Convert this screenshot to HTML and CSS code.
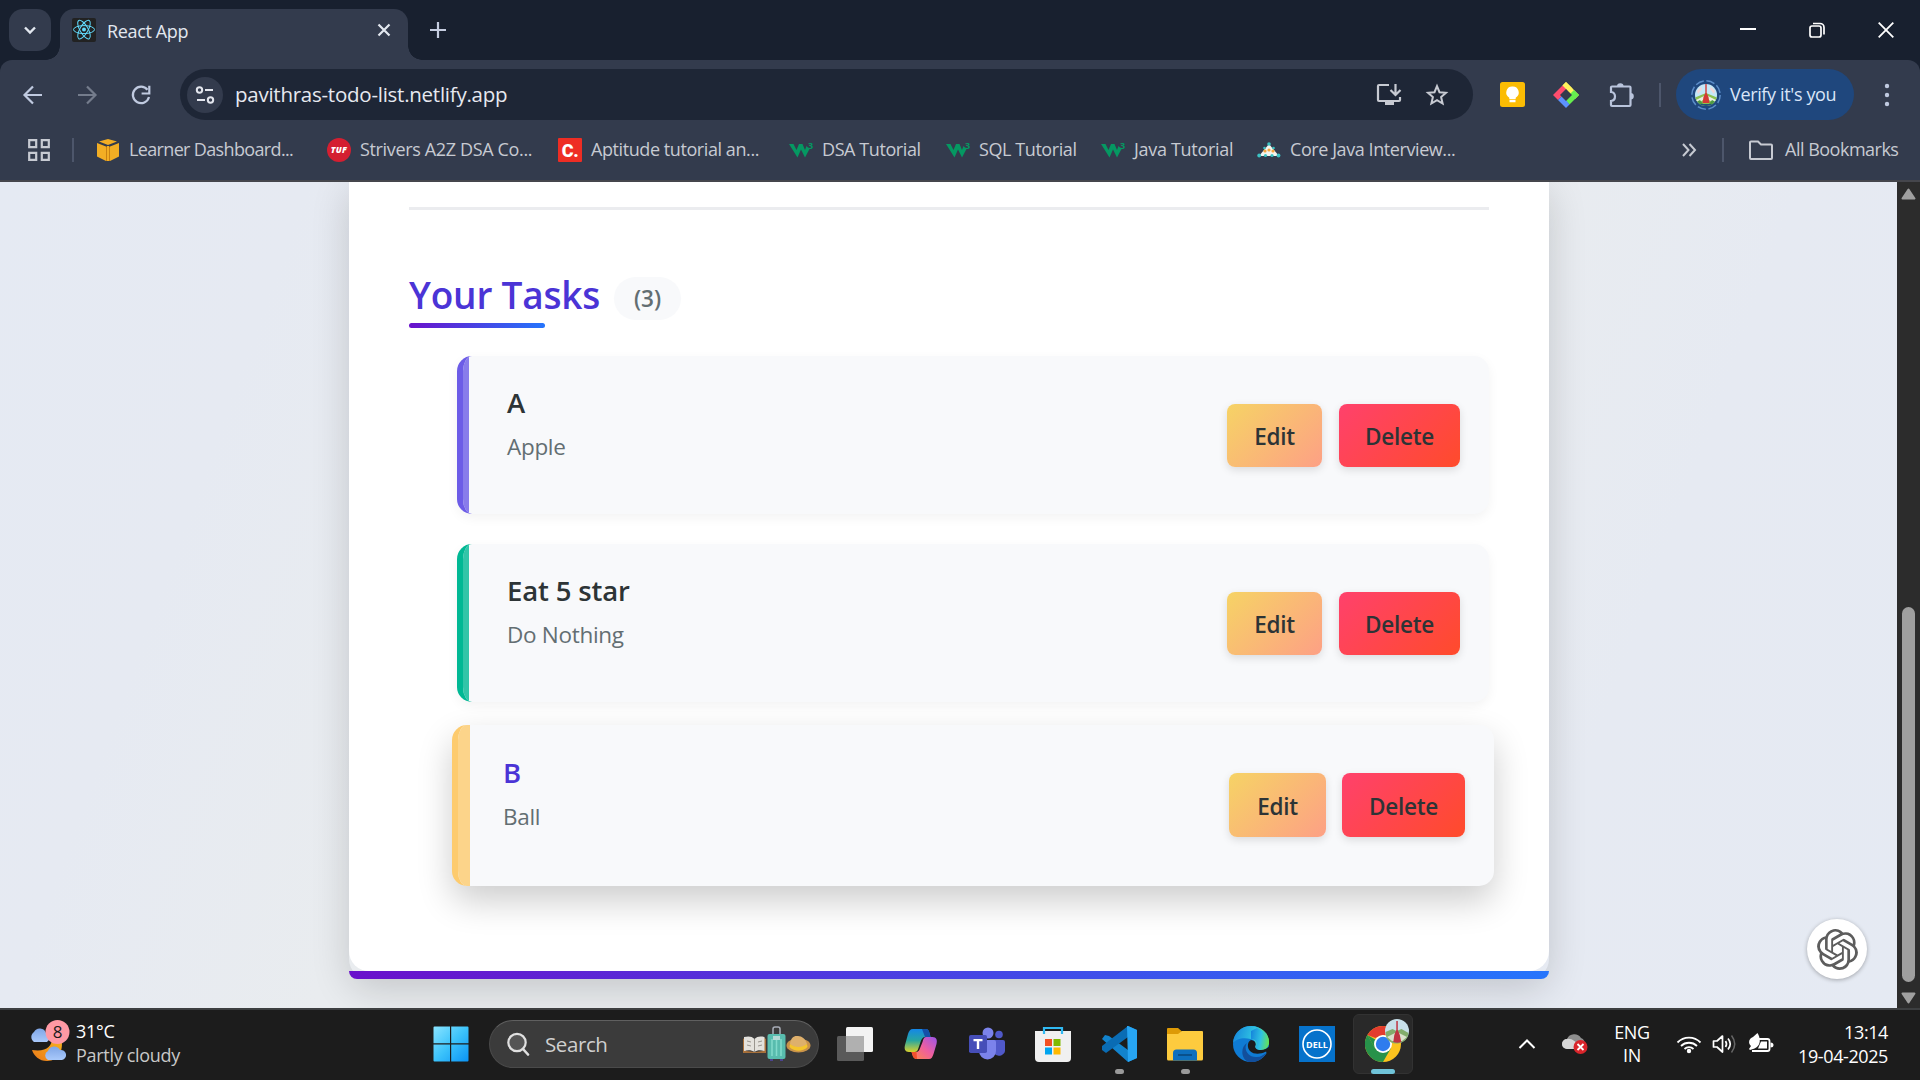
FILE: index.html
```html
<!DOCTYPE html>
<html lang="en">
<head>
<meta charset="utf-8">
<title>React App</title>
<link rel="stylesheet" href="styles.css">
</head>
<body>
<div class="screen">
  <header class="browser">
    <div class="tabstrip">
      <button class="tab-search"><svg width="14" height="14" viewBox="0 0 14 14"><path d="M2 4.5l5 5 5-5" fill="none" stroke="#e3e8f0" stroke-width="2.4"/></svg></button>
      <div class="tab">
        <svg class="favicon" width="24" height="24" viewBox="0 0 24 24"><rect width="24" height="24" rx="2" fill="#222"/><g fill="none" stroke="#61dafb" stroke-width="1"><ellipse cx="12" cy="11.6" rx="10.5" ry="4"/><ellipse cx="12" cy="11.6" rx="10.5" ry="4" transform="rotate(60 12 11.6)"/><ellipse cx="12" cy="11.6" rx="10.5" ry="4" transform="rotate(120 12 11.6)"/></g><circle cx="12" cy="11.6" r="2" fill="#61dafb"/></svg>
        <span class="tab-title">React App</span>
        <svg class="tab-close" width="14" height="14" viewBox="0 0 14 14"><path d="M1.5 1.5l11 11M12.500 1.500l-11 11" stroke="#e3e8f0" stroke-width="2.200"/></svg>
      </div>
      <svg class="new-tab" width="18" height="18" viewBox="0 0 18 18"><path d="M9 1v16M1 9h16" stroke="#c5cde0" stroke-width="2.200"/></svg>
      <div class="window-controls">
        <svg width="16" height="16" viewBox="0 0 16 16"><path d="M0 7h16" stroke="#fff" stroke-width="2"/></svg>
        <svg width="16" height="16" viewBox="0 0 16 16"><g fill="none" stroke="#fff" stroke-width="1.700"><rect x="1" y="4" width="11" height="11" rx="2"/><path d="M4 1.500h7a4 4 0 0 1 4 4v7"/></g></svg>
        <svg width="16" height="16" viewBox="0 0 16 16"><path d="M.7.700l14.600 14.600M15.300.700L.7 15.300" stroke="#fff" stroke-width="1.800"/></svg>
      </div>
    </div>
    <div class="toolbar">
      <svg class="nav-icon" width="24" height="24" viewBox="0 0 24 24"><path d="M21 12H4M12 3.500L3.500 12l8.500 8.500" fill="none" stroke="#c0cae0" stroke-width="2.200"/></svg>
      <svg class="nav-icon" width="24" height="24" viewBox="0 0 24 24"><path d="M3 12h17M12 3.500l8.500 8.500-8.500 8.500" fill="none" stroke="#747c8c" stroke-width="2.200"/></svg>
      <svg class="nav-icon" width="24" height="24" viewBox="0 0 24 24"><path d="M18.500 6.800A8.200 8.200 0 1 0 20 14" fill="none" stroke="#c0cae0" stroke-width="2.200"/><path d="M20.300 2.800v7.700h-7.700" fill="none" stroke="#c0cae0" stroke-width="2.200"/></svg>
      <div class="omnibox">
        <span class="site-info"><svg width="20" height="20" viewBox="0 0 20 20"><g fill="none" stroke="#e3e6ee" stroke-width="2"><circle cx="4.500" cy="5" r="2.700"/><path d="M10 5h8M2 15h8"/><circle cx="15.500" cy="15" r="2.700"/></g></svg></span>
        <span class="url">pavithras-todo-list.netlify.app</span>
        <svg class="install" width="26" height="24" viewBox="0 0 26 24"><path d="M13 2H3a1 1 0 0 0-1 1v14a1 1 0 0 0 1 1h20a1 1 0 0 0 1-1v-3" fill="none" stroke="#c7cad2" stroke-width="2.200"/><path d="M9 18h9v4H9z" fill="#c7cad2"/><path d="M19.500 1v10M14.500 7l5 5 5-5" fill="none" stroke="#c7cad2" stroke-width="2.200"/></svg>
        <svg width="24" height="24" viewBox="0 0 24 24"><path d="M12 3.200l2.500 6 6.500.6-4.900 4.300 1.500 6.400L12 17.100l-5.600 3.400 1.500-6.400L3 9.800l6.500-.6z" fill="none" stroke="#c7cad2" stroke-width="2"/></svg>
      </div>
      <svg class="ext-keep" width="25" height="25" viewBox="0 0 25 25"><rect width="25" height="25" rx="2.500" fill="#fbbc04"/><path d="M12.500 4.500a6 6 0 0 0-3.200 11.200V17h6.400v-1.300A6 6 0 0 0 12.500 4.500zM9.500 17.800h6v2.400h-6z" fill="#fff"/></svg>
      <svg class="ext-diamond" width="26" height="26" viewBox="0 0 26 26"><path d="M13 0l6.500 6.500-6.500 6-3.500-9z" fill="#fff35c"/><path d="M13 0l13 13-4 4-9-9.500-3.500-4z" fill="#fff35c"/><path d="M9.500 3.500l5 5L5 18l-5-5z" fill="#ff4d6d"/><path d="M26 13L16.500 22.500l-5-5 9.500-9.500z" fill="#66ee4e"/><path d="M5 18l4.500-4.500 7 9L13 26z" fill="#5c92ff"/><path d="M13 7l6 6-6 6-6-6z" fill="#333b4d"/></svg>
      <svg class="ext-puzzle" width="26" height="26" viewBox="0 0 26 26"><path d="M3 4.500h17.500a1 1 0 0 1 1 1V23a1 1 0 0 1-1 1H3a1 1 0 0 1-1-1v-4q4-.5 4-4.500t-4-4.500V5.500a1 1 0 0 1 1-1z" fill="none" stroke="#b9c4dc" stroke-width="2.200"/><path d="M8 4.500a3.300 3.300 0 0 1 6.600 0zM21.500 11a3.300 3.300 0 0 1 0 6.600z" fill="#b9c4dc"/></svg>
      <i class="divider"></i>
      <div class="profile">
        <svg width="32" height="32" viewBox="0 0 32 32"><defs><clipPath id="avatar"><circle cx="16" cy="16" r="11"/></clipPath></defs><circle cx="16" cy="16" r="14.200" fill="none" stroke="#5b8cc8" stroke-width="1.500" stroke-dasharray="8.500 2.650"/><g clip-path="url(#avatar)"><path fill="#c4e8f8" d="M4 4h24v24H4z"/><path fill="#f3d5d6" d="M7 12l4-4 1 2-4 5zM25 12l-4-4-1 2 4 5z"/><path fill="#8cc152" d="M4 19l12-5 12 5v9H4z"/><path fill="#e9efe0" d="M4 22l10-5 2 2-9 6zM28 22l-10-5-2 2 9 6z"/><path fill="#4f9a43" d="M4 24l6-3 3 4v4H4zM28 24l-6-3-3 4v4h9z"/><path fill="#d33a35" d="M15.300 5h1.400v9l1.800 4 1 6h-7l1-6 1.800-4z"/><path fill="#23507c" d="M9 25h14v4H9z"/></g></svg>
        <span>Verify it's you</span>
      </div>
      <svg class="menu-dots" width="6" height="26" viewBox="0 0 6 26"><g fill="#c0cae0"><circle cx="3" cy="4" r="2.200"/><circle cx="3" cy="13" r="2.200"/><circle cx="3" cy="22" r="2.200"/></g></svg>
    </div>
    <nav class="bookmarks">
      <svg class="apps" width="22" height="22" viewBox="0 0 22 22"><g fill="none" stroke="#c7cad2" stroke-width="2.200"><path d="M1.200 1.200h7v7h-7zM13.800 1.200h7v7h-7zM1.200 13.800h7v7h-7zM13.800 13.800h7v7h-7z"/></g></svg>
      <i class="divider"></i>
      <a class="bm bm-learner"><svg width="24" height="24" viewBox="0 0 24 24"><path fill="#f3ae24" d="M1 5l9 3.500V23L1 18.500zM23 5l-9 3.500V23l9-4.500zM3 3.500L12 1l9 2.500L12 7z"/><path fill="#c98212" d="M10 8.500h4V23h-4z"/><path fill="#f3ae24" d="M11 8h2v15h-2z"/></svg><span>Learner Dashboard...</span></a>
      <a class="bm bm-tuf"><svg width="24" height="24" viewBox="0 0 24 24"><circle cx="12" cy="12" r="12" fill="#d41f31"/><text x="12" y="15" class="tuf-text">TUF</text></svg><span>Strivers A2Z DSA Co...</span></a>
      <a class="bm bm-apt"><svg width="24" height="24" viewBox="0 0 24 24"><rect width="24" height="24" rx="1" fill="#ee2d24"/><text x="12" y="19" class="c-text">C.</text></svg><span>Aptitude tutorial an...</span></a>
      <a class="bm bm-dsa"><svg width="24" height="24" viewBox="0 0 24 24"><path class="w3" d="M0 6h4.500l3 6L10 6h3.500l2.500 6 1.500-4 3 3-4.500 8.500-4-8-3.500 8z"/><text x="19" y="10.500" class="w3-text">3</text></svg><span>DSA Tutorial</span></a>
      <a class="bm bm-sql"><svg width="24" height="24" viewBox="0 0 24 24"><path class="w3" d="M0 6h4.500l3 6L10 6h3.500l2.500 6 1.500-4 3 3-4.500 8.500-4-8-3.500 8z"/><text x="19" y="10.500" class="w3-text">3</text></svg><span>SQL Tutorial</span></a>
      <a class="bm bm-java"><svg width="24" height="24" viewBox="0 0 24 24"><path class="w3" d="M0 6h4.500l3 6L10 6h3.500l2.500 6 1.500-4 3 3-4.500 8.500-4-8-3.500 8z"/><text x="19" y="10.500" class="w3-text">3</text></svg><span>Java Tutorial</span></a>
      <a class="bm bm-core"><svg width="24" height="24" viewBox="0 0 24 24"><path d="M12 6L2 18h20z" fill="#f4f4ee"/><g fill="#3cc3c4"><circle cx="12" cy="6" r="1.800"/><circle cx="7.500" cy="10" r="1.300"/><circle cx="16.500" cy="10" r="1.300"/><circle cx="2.200" cy="17.500" r="1.900"/><circle cx="8.500" cy="17.500" r="1.600"/><circle cx="15" cy="17.500" r="1.600"/><circle cx="21.500" cy="17.500" r="1.900"/></g><g fill="#f5a43c"><circle cx="8" cy="13" r="1.600"/><circle cx="12" cy="12" r="1.600"/><circle cx="16" cy="13" r="1.600"/></g></svg><span>Core Java Interview...</span></a>
      <svg class="more" width="16" height="16" viewBox="0 0 16 16"><path d="M2 2l5.500 6L2 14M8.500 2l5.500 6-5.500 6" fill="none" stroke="#c7cad2" stroke-width="2"/></svg>
      <i class="divider"></i>
      <a class="bm all-bm"><svg width="24" height="20" viewBox="0 0 24 20"><path d="M2 1.500h7l3 3h10a1 1 0 0 1 1 1V18a1 1 0 0 1-1 1H2a1 1 0 0 1-1-1V2.500a1 1 0 0 1 1-1z" fill="none" stroke="#c7cad2" stroke-width="2"/></svg><span>All Bookmarks</span></a>
    </nav>
  </header>

  <div class="viewport">
    <div class="page">
      <main class="card">
        <div class="card-body">
          <div class="section-head">
            <h2>Your Tasks</h2>
            <span class="count">(3)</span>
          </div>
          <ul class="tasks">
            <li class="task violet">
              <div class="task-text"><h3>A</h3><p>Apple</p></div>
              <div class="actions"><button class="btn edit">Edit</button><button class="btn delete">Delete</button></div>
            </li>
            <li class="task green">
              <div class="task-text"><h3>Eat 5 star</h3><p>Do Nothing</p></div>
              <div class="actions"><button class="btn edit">Edit</button><button class="btn delete">Delete</button></div>
            </li>
            <li class="task amber hovered">
              <div class="task-text"><h3>B</h3><p>Ball</p></div>
              <div class="actions"><button class="btn edit">Edit</button><button class="btn delete">Delete</button></div>
            </li>
          </ul>
        </div>
        <div class="card-bar"></div>
      </main>
      <div class="assistant"><svg width="41" height="41" viewBox="0 0 24 24"><path fill="#5d5d5d" d="M22.282 9.821a5.985 5.985 0 0 0-.516-4.910 6.046 6.046 0 0 0-6.510-2.900A6.065 6.065 0 0 0 4.981 4.182a5.985 5.985 0 0 0-3.998 2.900 6.046 6.046 0 0 0 .743 7.097 5.980 5.980 0 0 0 .510 4.911 6.051 6.051 0 0 0 6.515 2.900A5.985 5.985 0 0 0 13.260 24a6.056 6.056 0 0 0 5.772-4.206 5.990 5.990 0 0 0 3.998-2.900 6.056 6.056 0 0 0-.748-7.073zM13.260 22.430a4.476 4.476 0 0 1-2.876-1.040l.142-.081 4.778-2.758a.795.795 0 0 0 .393-.681v-6.737l2.020 1.168a.071.071 0 0 1 .038.052v5.583a4.504 4.504 0 0 1-4.495 4.494zM3.600 18.304a4.471 4.471 0 0 1-.535-3.014l.142.085 4.783 2.759a.771.771 0 0 0 .780 0l5.843-3.369v2.332a.080.080 0 0 1-.033.062L9.740 19.950a4.500 4.500 0 0 1-6.140-1.646zM2.340 7.896a4.485 4.485 0 0 1 2.366-1.973V11.600a.766.766 0 0 0 .388.676l5.815 3.355-2.020 1.168a.076.076 0 0 1-.071 0l-4.830-2.786A4.504 4.504 0 0 1 2.340 7.872zm16.597 3.855l-5.833-3.387L15.119 7.200a.076.076 0 0 1 .071 0l4.830 2.791a4.494 4.494 0 0 1-.676 8.105v-5.678a.790.790 0 0 0-.407-.667zm2.010-3.023l-.141-.085-4.774-2.782a.776.776 0 0 0-.785 0L9.409 9.230V6.897a.066.066 0 0 1 .028-.061l4.830-2.787a4.500 4.500 0 0 1 6.680 4.660zm-12.640 4.135l-2.020-1.164a.080.080 0 0 1-.038-.057V6.075a4.500 4.500 0 0 1 7.375-3.453l-.142.080L8.704 5.460a.795.795 0 0 0-.393.681zm1.097-2.365l2.602-1.500 2.607 1.500v2.999l-2.597 1.500-2.607-1.500z"/></svg></div>
    </div>
    <div class="scrollbar">
      <svg width="15" height="12" viewBox="0 0 15 12"><path d="M7.500 1.500L13.500 10.500h-12z" fill="#a0a0a0" stroke="#a0a0a0" stroke-width="2" stroke-linejoin="round"/></svg>
      <div class="thumb"></div>
      <svg width="15" height="12" viewBox="0 0 15 12"><path d="M7.500 10.500L13.500 1.500h-12z" fill="#a0a0a0" stroke="#a0a0a0" stroke-width="2" stroke-linejoin="round"/></svg>
    </div>
  </div>

  <footer class="taskbar">
    <div class="weather">
      <svg width="44" height="44" viewBox="0 0 44 44"><defs><linearGradient id="moon" x1="1" y1="0" x2="0" y2="1"><stop offset="0" stop-color="#f9b41c"/><stop offset="1" stop-color="#ea7a1b"/></linearGradient><linearGradient id="cloud" x1="0" y1="0" x2="0" y2="1"><stop offset="0" stop-color="#7fa6e6"/><stop offset="1" stop-color="#a9c9fb"/></linearGradient></defs><path d="M33 18c3 10-1 23-14 23-8 0-13-5-15-11 14 2 20-3 20-12z" fill="url(#moon)"/><path d="M6 22a6 6 0 0 1 0-10 6.500 6.500 0 0 1 12 1 5 5 0 0 1 1 9z" fill="url(#cloud)"/><path d="M20 40a5 5 0 0 1 0-9 6.500 6.500 0 0 1 12-1 5 5 0 0 1 2 10z" fill="url(#cloud)"/><circle cx="29.500" cy="12" r="12" fill="#ff99a4"/><text x="29.500" y="17.500" class="badge-text">8</text></svg>
      <div class="weather-text"><span class="temp">31°C</span><span class="cond">Partly cloudy</span></div>
    </div>
    <svg class="start" width="36" height="36" viewBox="0 0 36 36"><defs><linearGradient id="win" x1="0" y1="0" x2="1" y2="1"><stop offset="0" stop-color="#8ae4ff"/><stop offset=".5" stop-color="#3cc3fb"/><stop offset="1" stop-color="#0a93f5"/></linearGradient></defs><path d="M1.500.500H17v16.700H.5V1.500a1 1 0 0 1 1-1zM18.200.500h16.300a1 1 0 0 1 1 1v15.700H18.200zM.5 18.400H17v17.100H1.500a1 1 0 0 1-1-1zM18.200 18.400h17.300v16.100a1 1 0 0 1-1 1H18.200z" fill="url(#win)"/></svg>
    <div class="search">
      <svg width="24" height="24" viewBox="0 0 24 24"><circle cx="11" cy="10.500" r="8.700" fill="#555" stroke="#e0e0e0" stroke-width="2.200"/><path d="M17 17l5 5.500" stroke="#e0e0e0" stroke-width="2.600" stroke-linecap="round"/></svg>
      <span>Search</span>
      <svg class="doodle" width="68" height="36" viewBox="0 0 68 36"><path d="M0 13l3-2v14l9 1 8-1V11l3 2v14H0z" fill="#a8703a"/><path d="M1 11c4-1 8-1 10.500 2C14 10 18 10 21.500 11v14c-4-1-7.500-1-10 1-3-2-6.500-2-10.500-1z" fill="#e4e2dd"/><path d="M11.500 13v13M4 15l4 1M4 19l4 1M19 15l-4 1M19 19l-4 1" stroke="#99958e" fill="none"/><path d="M30 8V3q0-2 2-2h3q2 0 2 2v5" fill="none" stroke="#a9adb8" stroke-width="1.500"/><rect x="24.500" y="8" width="18" height="25" rx="2" fill="#58bcae"/><path d="M29 13v17M33.500 14v16M38 13v17" stroke="#82dacc" stroke-width="1.500"/><path d="M30 10h7v4h-7z" fill="#b5d9d5"/><path d="M27 33h3v2h-3zM37 33h3v2h-3z" fill="#4c438e"/><ellipse cx="55.500" cy="19.500" rx="12" ry="7" fill="#c8924a"/><path d="M47 18c1-7 4-8.500 8-8s7 2 9 8c-4 5-12 5-17 0z" fill="#deb06c"/><path d="M47 18c5 4 12 4 17 0l.5 3c-5 5-13 5-18 0z" fill="#f5c52c"/></svg>
    </div>
    <div class="apps-row">
      <span class="app"><svg width="36" height="36" viewBox="0 0 36 36"><rect x="9" y="1" width="27" height="25" rx="1.500" fill="#f3f3f3"/><rect x="0" y="10" width="27" height="25" rx="1.500" fill="#5a5a5a"/><path d="M9 10h18v16H9z" fill="#b0b0b0"/></svg></span>
      <span class="app"><svg width="36" height="36" viewBox="0 0 36 36"><defs><linearGradient id="cpa" x1="0" y1="0" x2="0" y2="1"><stop offset="0" stop-color="#1487e8"/><stop offset=".5" stop-color="#28a6a0"/><stop offset="1" stop-color="#d9d22c"/></linearGradient><linearGradient id="cpb" x1="1" y1="0" x2="0" y2="1"><stop offset="0" stop-color="#9a55ea"/><stop offset=".5" stop-color="#ee5f9f"/><stop offset="1" stop-color="#ff8a45"/></linearGradient></defs><path d="M10 3h13c2 0 3 2 3.500 4l1 4h-5c-3 0-4 2-5 5l-2 6c-1 3-2 4-4 4H6c-4 0-5-3-4-7l3-11c1-3 2-5 5-5z" fill="url(#cpa)"/><path d="M19 3h4c2 0 3 2 3.500 4l1 4H22z" fill="#1450a8"/><path d="M26 33H14c-3 0-4-2-4.500-4l-1-3h4c3 0 4-2 5-5l2-5c1-4 2-5 4-5h6c4 0 5 3 4 7l-3 10c-1 3-2 5-4.500 5z" fill="url(#cpb)"/><path d="M14 33c-3 0-4-2-4.500-4l-1-3h5z" fill="#f0502e"/></svg></span>
      <span class="app"><svg width="36" height="36" viewBox="0 0 36 36"><circle cx="30" cy="8.500" r="3.800" fill="#5059c9"/><path d="M25 14h9a2 2 0 0 1 2 2v7a6 6 0 0 1-11 4z" fill="#5059c9"/><circle cx="19" cy="7" r="5.500" fill="#7b83eb"/><path d="M11 14h14a2 2 0 0 1 2 2v9a8.500 8.500 0 0 1-17 0V15z" fill="#7b83eb"/><rect x="0" y="9" width="18" height="18" rx="1.800" fill="#464eb8"/><path d="M4.500 13h9v2.200H10.200V23H7.800v-7.800H4.500z" fill="#fff"/></svg></span>
      <span class="app"><svg width="36" height="36" viewBox="0 0 36 36"><path d="M0 5h36v27a4 4 0 0 1-4 4H4a4 4 0 0 1-4-4z" fill="#f0f0f0"/><path d="M9 8V2h18v6" fill="none" stroke="#30b9f2" stroke-width="2.200"/><path fill="#f25022" d="M10 13h7v7h-7z"/><path fill="#7fba00" d="M18.500 13h7v7h-7z"/><path fill="#00a4ef" d="M10 21.500h7v7h-7z"/><path fill="#ffb900" d="M18.500 21.500h7v7h-7z"/></svg></span>
      <span class="app running"><svg width="36" height="36" viewBox="0 0 36 36"><path d="M27 0l9 4v28l-9 4L1 13l3-4 4 1 19 14z" fill="#1283cd"/><path d="M27 0v11L5 27l-4-3v-4z" fill="#0a6cb4"/><path d="M26 0l1 0 9 4v28l-9 4z" fill="#27a5f3"/></svg></span>
      <span class="app running"><svg width="36" height="36" viewBox="0 0 36 36"><path d="M0 3a1 1 0 0 1 1-1h10l4 3.500L11 10H0z" fill="#dd9a06"/><path d="M0 8h11l4-3h20a1 1 0 0 1 1 1v27a1.500 1.500 0 0 1-1.500 1.500h-33A1.500 1.500 0 0 1 0 33z" fill="#fdcb3e"/><path d="M6 34.500V27a3.500 3.500 0 0 1 3.500-3.500h17A3.500 3.500 0 0 1 30 27v7.500z" fill="#0d6fbd"/><path d="M11 29h14" stroke="#0a4d86" stroke-width="1.800"/></svg></span>
      <span class="app"><svg width="36" height="36" viewBox="0 0 36 36"><defs><linearGradient id="eg" x1="0" y1=".3" x2="1" y2=".5"><stop offset="0" stop-color="#1687dc"/><stop offset=".55" stop-color="#2fc2e2"/><stop offset="1" stop-color="#62e05c"/></linearGradient></defs><circle cx="18" cy="18" r="18" fill="#0f7bd4"/><path d="M0 17C1 6 9 0 18 0c11 0 18 8 18 16 0 5-4 8-8.500 8-5 0-6-2-5-4s0-6-5-7C10 11 3 13 0 17z" fill="url(#eg)"/><path d="M14 17c-4 6 1 15 10 14 4 0 6-2 9-4-4 8-12 10-17 9-8-2-9-15-2-19z" fill="#124f9c"/><path d="M18 14c-4 2-4 8-1 11 4 4 11 3 15 1 1-.4 2 0 1 1l6-2V16c-3 8-10 8-13 7-5-1-4-3-3.500-4 .6-2-1-5-4.500-5z" fill="#1c1c1c"/><path d="M18 13c5 0 7 4 5 7-1 2 0 4 5 4 4 0 8-3 8-8 0-3-1-6-3-9l-9-5-6 3z" fill="url(#eg)"/></svg></span>
      <span class="app"><svg width="36" height="36" viewBox="0 0 36 36"><path fill="#0672cb" d="M0 0h36v36H0z"/><circle cx="18" cy="18" r="14" fill="none" stroke="#fff" stroke-width="1.600"/><text x="18" y="21.600" class="dell-text">DELL</text></svg></span>
      <span class="app active"><svg width="44" height="44" viewBox="0 0 44 44"><circle cx="18" cy="26" r="18" fill="#fcc31e"/><path d="M2.400 17A18 18 0 0 1 33.600 17H18z" fill="#e33b2e"/><path d="M2.400 17A18 18 0 0 0 18 44l7.800-13.500L18 26 10.200 30.500z" fill="#27924a"/><path d="M2.400 17L10 30.500 18 26z" fill="#27924a"/><path d="M2.400 17l8 3 7.600-3z" fill="#e33b2e"/><circle cx="18" cy="26" r="9" fill="#fff"/><circle cx="18" cy="26" r="7.200" fill="#2f7cee"/><circle cx="32" cy="13" r="12" fill="#c8e0ea"/><path d="M20.500 14l7-3 4 2 5-2 7 4a12 12 0 0 1-22 5z" fill="#82ad6c"/><path d="M22 19l8-4 4 0 8 4-5 4h-10z" fill="#d9e2cd"/><path d="M31.300 3h1.500v9l2 5 1.500 7a12 12 0 0 1-8 0l1-7 2-5z" fill="#bf3442"/></svg></span>
    </div>
    <div class="tray">
      <svg class="chev" width="18" height="12" viewBox="0 0 18 12"><path d="M1.500 10L9 2.500l7.500 7.500" fill="none" stroke="#fff" stroke-width="2"/></svg>
      <svg class="onedrive" width="26" height="22" viewBox="0 0 26 22"><path d="M5 16A5 5 0 0 1 5 6a8 8 0 0 1 14-1c3 1 4 4 4 6l-3 5z" fill="#8e8e8e"/><path d="M5 16A5 5 0 0 1 5 6c5-1 8 3 14 7v3z" fill="#d6d6d6"/><circle cx="18.500" cy="14" r="7" fill="#d9252b"/><path d="M15.500 11l6 6M21.500 11l-6 6" stroke="#fff" stroke-width="1.800"/></svg>
      <div class="lang"><span>ENG</span><span>IN</span></div>
      <svg class="wifi" width="26" height="20" viewBox="0 0 26 20"><g fill="none" stroke="#fff" stroke-width="1.800"><path d="M1.500 8.500a16 16 0 0 1 23 0M5 12a11.500 11.500 0 0 1 16 0M8.500 15a6.500 6.500 0 0 1 9 0"/></g><circle cx="13" cy="17" r="2.200" fill="#fff"/></svg>
      <svg class="sound" width="26" height="20" viewBox="0 0 26 20"><g fill="none" stroke="#fff" stroke-width="1.700" stroke-linejoin="round"><path d="M1.500 7v6H5l5.500 5V2L5 7zM13.500 7q2 3 0 6M16 4.500q4.500 5.500 0 11"/></g><path d="M19.500 1.500q6.500 8.500 0 17" fill="none" stroke="#666" stroke-width="1.500"/></svg>
      <svg class="battery" width="26" height="22" viewBox="0 0 26 22"><path d="M11 6h8.500a2 2 0 0 1 2 2v8a2 2 0 0 1-2 2H4" fill="none" stroke="#fff" stroke-width="1.800"/><path d="M13 8.500h6v7h-9zM22.500 9.500q3 0 3 2.500t-3 2.500z" fill="#fff"/><path d="M9.500 0c3 5 4 12-3 15.500L2 17l-1-1 2-3C-1 9 2 5 5 4z" fill="#fff"/></svg>
      <div class="clock"><span>13:14</span><span>19-04-2025</span></div>
    </div>
  </footer>
</div>
</body>
</html>
```
FILE: styles.css
```css
* { box-sizing: border-box; }
body { margin: 0; font-family: "Open Sans", "Noto Sans", sans-serif; }
svg { display: block; flex: none; }
button { font-family: inherit; font-stretch: inherit; border: 0; padding: 0; }
.screen { width: 1920px; height: 1080px; display: flex; flex-direction: column; overflow: hidden; }

/* browser frame */
.browser { height: 182px; flex: none; background: #18202f; display: flex; flex-direction: column; font-stretch: 92%; }
.tabstrip { height: 60px; display: flex; align-items: center; padding-left: 9px; }
.tab-search { width: 42px; height: 42px; border-radius: 14px; background: #333b4d; display: flex; align-items: center; justify-content: center; }
.tab { position: relative; width: 348px; height: 51px; margin: 9px 0 0 9px; padding: 0 17px 9px 12px; border-radius: 14px 14px 0 0; background: #333b4d; display: flex; align-items: center; color: #e3e8f0; font-size: 18px; }
.tab::before, .tab::after { content: ""; position: absolute; bottom: 0; width: 14px; height: 14px; }
.tab::before { left: -14px; background: radial-gradient(circle at 0 0, transparent 13.500px, #333b4d 14px); }
.tab::after { right: -14px; background: radial-gradient(circle at 100% 0, transparent 13.500px, #333b4d 14px); }
.tab-title { margin: 1px auto 0 11px; letter-spacing: -.35px; }
.new-tab { margin-left: 21px; }
.window-controls { margin: 0 26px 0 auto; display: flex; gap: 53px; }
.toolbar { height: 69px; background: #333b4d; border-radius: 12px 12px 0 0; display: flex; align-items: center; padding-left: 21px; }
.nav-icon { margin-right: 30px; }
.omnibox { width: 1293px; height: 51px; margin-left: -3px; padding: 0 24px 0 7px; border-radius: 26px; background: #1e2636; display: flex; align-items: center; }
.site-info { width: 36px; height: 36px; border-radius: 50%; background: #333b4d; display: flex; align-items: center; justify-content: center; }
.url { margin: -2px auto 0 12px; color: #e6e9f0; font-size: 20.500px; letter-spacing: -.25px; }
.install { margin-right: 23px; }
.ext-keep { margin-left: 27px; }
.ext-diamond { margin-left: 28px; }
.ext-puzzle { margin-left: 30px; }
.divider { width: 2px; height: 24px; background: #4d566b; flex: none; }
.toolbar .divider { margin-left: 24px; }
.profile { width: 178px; height: 51px; margin-left: 15px; padding-left: 14px; border-radius: 26px; background: #1f477d; display: flex; align-items: center; gap: 8px; color: #d9e5f8; font-size: 18px; letter-spacing: -.35px; white-space: nowrap; }
.profile span { margin-top: -1px; }
.menu-dots { margin-left: 30px; }
.bookmarks { height: 53px; background: #333b4d; border-bottom: 2px solid #45464c; display: flex; align-items: center; padding: 0 22px 10px 28px; flex: 1; }
.bookmarks > .divider { margin: 0 22px 0 22px; }
.bm { display: flex; align-items: center; gap: 9px; color: #c7cad2; font-size: 18px; letter-spacing: -.42px; white-space: nowrap; flex: none; }
.bm span { margin-top: -2px; }
.bm-learner { width: 231px; letter-spacing: -.65px; }
.bm-tuf { width: 231px; letter-spacing: -.35px; }
.bm-apt { width: 231px; }
.bm-dsa { width: 157px; }
.bm-sql { width: 155px; }
.bm-java { width: 156px; letter-spacing: -.3px; }
.bm-core { width: 200px; }
.more { margin-left: auto; }
.bookmarks > .more + .divider { margin: 0 25px; }
.all-bm { width: 149px; gap: 12px; letter-spacing: -.5px; }
.tuf-text { font: italic 800 8.500px "Open Sans", sans-serif; fill: #fff; text-anchor: middle; letter-spacing: .3px; }
.c-text { font: 900 18px Roboto, sans-serif; fill: #fff; text-anchor: middle; }
.w3 { fill: #059862; }
.w3-text { font: 700 9px "Open Sans", sans-serif; fill: #059862; letter-spacing: 0; }

/* page */
.viewport { height: 826px; flex: none; display: flex; }
.page { position: relative; flex: 1; overflow: hidden; background: linear-gradient(110deg, #e5eaf3, #e6eaf2 14%, #e9ecef 28%, #e9ecef 68%, #e6eaf2 82%, #e5eaf3); }
.card { width: 1200px; height: 797px; margin-left: 349px; display: flex; flex-direction: column; border-radius: 0 0 20px 20px; box-shadow: 0 10px 38px rgba(0, 0, 0, .16); }
.card-body { height: 789px; padding: 25px 60px 0; background: #fff; border-radius: 0 0 20px 20px; }
.card-bar { height: 8px; border-radius: 0 0 8px 8px; background: linear-gradient(90deg, #6a11cb, #2575fc); }
.section-head { display: flex; border-top: 3px solid #ebecef; height: 121px; padding-top: 61px; }
h2 { position: relative; margin: 0; width: 182px; height: 60px; color: #4b34d6; font-size: 37px; font-weight: 600; font-stretch: 93%; line-height: 48px; letter-spacing: -.2px; white-space: nowrap; }
h2::after { content: ""; position: absolute; left: 0; bottom: 3px; width: 136px; height: 5px; border-radius: 3px; background: linear-gradient(90deg, #6a11cb, #2575fc); }
.count { margin: 6px 0 0 23px; width: 67px; height: 43px; border-radius: 22px; background: #f8f9fb; color: #636e72; font-size: 22.500px; font-weight: 600; font-stretch: 92%; line-height: 44px; text-align: center; }
.tasks { list-style: none; margin: 28px 0 0; padding: 0 0 0 48px; display: flex; flex-direction: column; gap: 30px; }
.task { position: relative; width: 1032px; height: 158px; padding: 29px 29px 0 44px; border-left: 6px solid var(--tone); border-radius: 15px; background: #f8f9fb; box-shadow: 0 4px 12px rgba(0, 0, 0, .05); display: flex; justify-content: space-between; overflow: hidden; }
.task::before { content: ""; position: absolute; left: 0; top: 0; width: 6px; height: 100%; background: var(--tone); opacity: .8; }
.violet { --tone: #6c5ce7; }
.green { --tone: #00b894; }
.amber { --tone: #fdcb6e; }
.hovered { width: 1042px; height: 161px; margin: -7px 0 0 -5px; padding: 30px 29px 0 45px; box-shadow: 0 15px 35px rgba(0, 0, 0, .2); }
.hovered::before { width: 12px; }
h3 { margin: 0; color: #2d3436; font-size: 27.500px; font-weight: 600; font-stretch: 93%; line-height: 35px; letter-spacing: -.15px; }
.hovered h3 { color: #4b34d6; }
.task p { margin: 10px 0 0; color: #636e72; font-size: 22.500px; line-height: 34px; letter-spacing: -.3px; }
.actions { display: flex; gap: 17px; padding-top: 19px; }
.btn { height: 63px; border-radius: 8px; color: #2d3436; font-size: 22.500px; font-weight: 600; font-stretch: 92%; letter-spacing: -.25px; padding-top: 2px; box-shadow: 0 3px 8px rgba(0, 0, 0, .12); }
.edit { width: 95px; background: linear-gradient(135deg, #f6d365, #fda085); }
.delete { width: 121px; background: linear-gradient(135deg, #ff416c, #ff4b2b); }
.hovered .actions { gap: 16px; padding-top: 18px; }
.hovered .btn { height: 64px; }
.hovered .edit { width: 97px; }
.hovered .delete { width: 123px; }
.assistant { position: absolute; right: 30px; bottom: 29px; width: 60px; height: 60px; border-radius: 50%; background: #fff; box-shadow: 0 1px 4px rgba(0, 0, 0, .3); display: flex; align-items: center; justify-content: center; }
.scrollbar { width: 23px; background: #2c2c2c; display: flex; flex-direction: column; align-items: center; padding: 6px 0 4px; }
.thumb { width: 13px; height: 375px; margin: auto 0 10px; border-radius: 7px; background: #9f9f9f; }

/* taskbar */
.taskbar { height: 72px; flex: none; background: #1c1c1c; border-top: 2px solid #3d3f41; display: flex; align-items: center; padding-bottom: 2px; color: #fff; font-size: 18px; letter-spacing: -.4px; font-stretch: 92%; }
.weather { width: 433px; padding: 0 0 4px 28px; display: flex; align-items: center; gap: 4px; }
.weather-text { display: flex; flex-direction: column; line-height: 24px; padding-top: 2px; letter-spacing: -.3px; }
.cond { color: #c8c8c8; }
.badge-text { font-size: 17px; fill: #1c1c1c; text-anchor: middle; letter-spacing: 0; }
.search { width: 330px; height: 48px; margin-left: 20px; padding: 0 7px 0 16px; border: 1.500px solid #4a4a4a; border-top-color: #606060; border-radius: 24px; background: #3b3b3b; display: flex; align-items: center; color: #cfcfcf; font-size: 20.500px; }
.search span { margin: -1px auto 0 15px; }
.apps-row { display: flex; align-items: center; margin-left: 6px; gap: 6px; }
.app { position: relative; width: 60px; height: 60px; display: flex; align-items: center; justify-content: center; }
.running::after, .active::after { content: ""; position: absolute; bottom: 0; left: 26px; width: 9px; height: 5px; border-radius: 3px; background: #9a9a9a; }
.active { border-radius: 6px; background: #292929; border: 1.500px solid #323232; align-items: flex-start; padding: 3px 0 0 8px; }
.active::after { left: 17px; bottom: -1px; width: 24px; background: #6fc3d8; }
.dell-text { font: 700 9px "Open Sans", sans-serif; fill: #fff; text-anchor: middle; letter-spacing: 0; }
.tray { margin-left: auto; padding-right: 32px; display: flex; align-items: center; }
.onedrive { margin-left: 26px; }
.lang { width: 40px; margin-left: 24px; display: flex; flex-direction: column; align-items: center; line-height: 23px; }
.wifi { margin-left: 24px; }
.sound { margin-left: 10px; }
.battery { margin-left: 10px; }
.clock { width: 92px; margin-left: 22px; display: flex; flex-direction: column; align-items: flex-end; line-height: 24px; white-space: nowrap; }
```
